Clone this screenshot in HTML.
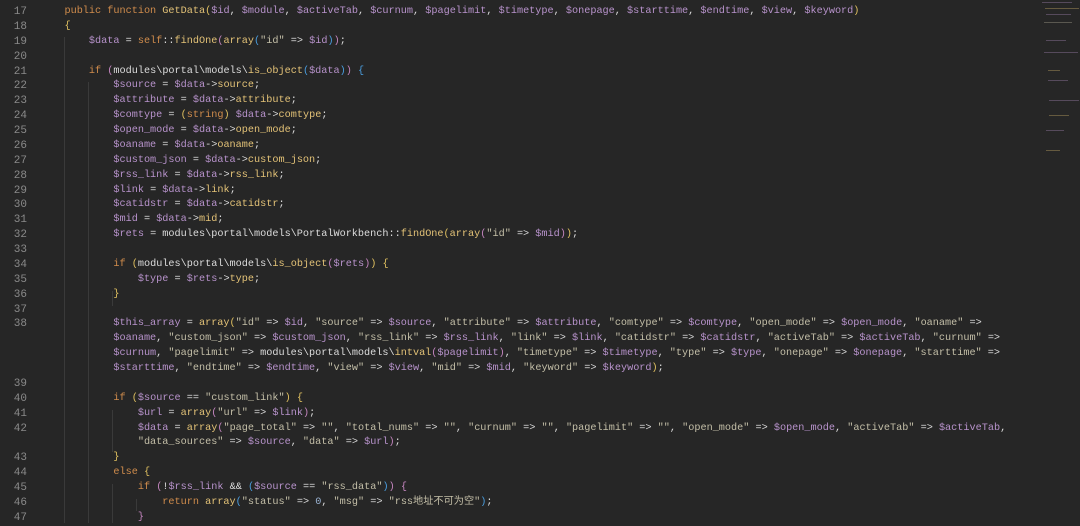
<!DOCTYPE html><html><head><meta charset="utf-8"><style>
body{margin:0;background:#262626;width:1080px;height:523px;overflow:hidden;font-family:"Liberation Mono","Noto Sans CJK SC",monospace;font-size:10.2px;}
.g{position:absolute;left:0;top:5px;width:27px;text-align:right;color:#8a8a8a;line-height:14.88px;white-space:pre;font-size:11px}
.c{position:absolute;left:40px;top:5px;color:#dcdcdc;line-height:14.88px;white-space:pre}
.k{color:#d08c4c}.f{color:#e3c277}.v{color:#b893cc}.s{color:#c4bfa8}.n{color:#9db6d6}
.b1{color:#e0c060}.b2{color:#c586c0}.b3{color:#4a9ee0}
.ig{position:absolute;width:1px;background:#3a3a3a}
.mm{position:absolute;height:1px;opacity:.35}
</style></head><body>
<div class="ig" style="left:64px;top:37px;height:486px"></div>
<div class="ig" style="left:88px;top:82px;height:441px"></div>
<div class="ig" style="left:112px;top:291px;height:15px"></div>
<div class="ig" style="left:112px;top:410px;height:42px"></div>
<div class="ig" style="left:112px;top:484px;height:39px"></div>
<div class="ig" style="left:136px;top:499px;height:12px"></div>
<div class="g">17
18
19
20
21
22
23
24
25
26
27
28
29
30
31
32
33
34
35
36
37
38



39
40
41
42

43
44
45
46
47</div>
<div class="c">    <span class="k">public function</span> <span class="f">GetData</span><span class="b1">(</span><span class="v">$id</span>, <span class="v">$module</span>, <span class="v">$activeTab</span>, <span class="v">$curnum</span>, <span class="v">$pagelimit</span>, <span class="v">$timetype</span>, <span class="v">$onepage</span>, <span class="v">$starttime</span>, <span class="v">$endtime</span>, <span class="v">$view</span>, <span class="v">$keyword</span><span class="b1">)</span>
    <span class="b1">{</span>
        <span class="v">$data</span> = <span class="k">self</span>::<span class="f">findOne</span><span class="b2">(</span><span class="f">array</span><span class="b3">(</span><span class="s">"id"</span> =&gt; <span class="v">$id</span><span class="b3">)</span><span class="b2">)</span>;

        <span class="k">if</span> <span class="b2">(</span>modules\portal\models\<span class="f">is_object</span><span class="b3">(</span><span class="v">$data</span><span class="b3">)</span><span class="b2">)</span> <span class="b3">{</span>
            <span class="v">$source</span> = <span class="v">$data</span>-&gt;<span class="f">source</span>;
            <span class="v">$attribute</span> = <span class="v">$data</span>-&gt;<span class="f">attribute</span>;
            <span class="v">$comtype</span> = <span class="b1">(</span><span class="k">string</span><span class="b1">)</span> <span class="v">$data</span>-&gt;<span class="f">comtype</span>;
            <span class="v">$open_mode</span> = <span class="v">$data</span>-&gt;<span class="f">open_mode</span>;
            <span class="v">$oaname</span> = <span class="v">$data</span>-&gt;<span class="f">oaname</span>;
            <span class="v">$custom_json</span> = <span class="v">$data</span>-&gt;<span class="f">custom_json</span>;
            <span class="v">$rss_link</span> = <span class="v">$data</span>-&gt;<span class="f">rss_link</span>;
            <span class="v">$link</span> = <span class="v">$data</span>-&gt;<span class="f">link</span>;
            <span class="v">$catidstr</span> = <span class="v">$data</span>-&gt;<span class="f">catidstr</span>;
            <span class="v">$mid</span> = <span class="v">$data</span>-&gt;<span class="f">mid</span>;
            <span class="v">$rets</span> = modules\portal\models\PortalWorkbench::<span class="f">findOne</span><span class="b1">(</span><span class="f">array</span><span class="b2">(</span><span class="s">"id"</span> =&gt; <span class="v">$mid</span><span class="b2">)</span><span class="b1">)</span>;

            <span class="k">if</span> <span class="b1">(</span>modules\portal\models\<span class="f">is_object</span><span class="b2">(</span><span class="v">$rets</span><span class="b2">)</span><span class="b1">)</span> <span class="b1">{</span>
                <span class="v">$type</span> = <span class="v">$rets</span>-&gt;<span class="f">type</span>;
            <span class="b1">}</span>

            <span class="v">$this_array</span> = <span class="f">array</span><span class="b1">(</span><span class="s">"id"</span> =&gt; <span class="v">$id</span>, <span class="s">"source"</span> =&gt; <span class="v">$source</span>, <span class="s">"attribute"</span> =&gt; <span class="v">$attribute</span>, <span class="s">"comtype"</span> =&gt; <span class="v">$comtype</span>, <span class="s">"open_mode"</span> =&gt; <span class="v">$open_mode</span>, <span class="s">"oaname"</span> =&gt;
            <span class="v">$oaname</span>, <span class="s">"custom_json"</span> =&gt; <span class="v">$custom_json</span>, <span class="s">"rss_link"</span> =&gt; <span class="v">$rss_link</span>, <span class="s">"link"</span> =&gt; <span class="v">$link</span>, <span class="s">"catidstr"</span> =&gt; <span class="v">$catidstr</span>, <span class="s">"activeTab"</span> =&gt; <span class="v">$activeTab</span>, <span class="s">"curnum"</span> =&gt;
            <span class="v">$curnum</span>, <span class="s">"pagelimit"</span> =&gt; modules\portal\models\<span class="f">intval</span><span class="b2">(</span><span class="v">$pagelimit</span><span class="b2">)</span>, <span class="s">"timetype"</span> =&gt; <span class="v">$timetype</span>, <span class="s">"type"</span> =&gt; <span class="v">$type</span>, <span class="s">"onepage"</span> =&gt; <span class="v">$onepage</span>, <span class="s">"starttime"</span> =&gt;
            <span class="v">$starttime</span>, <span class="s">"endtime"</span> =&gt; <span class="v">$endtime</span>, <span class="s">"view"</span> =&gt; <span class="v">$view</span>, <span class="s">"mid"</span> =&gt; <span class="v">$mid</span>, <span class="s">"keyword"</span> =&gt; <span class="v">$keyword</span><span class="b1">)</span>;

            <span class="k">if</span> <span class="b1">(</span><span class="v">$source</span> == <span class="s">"custom_link"</span><span class="b1">)</span> <span class="b1">{</span>
                <span class="v">$url</span> = <span class="f">array</span><span class="b2">(</span><span class="s">"url"</span> =&gt; <span class="v">$link</span><span class="b2">)</span>;
                <span class="v">$data</span> = <span class="f">array</span><span class="b2">(</span><span class="s">"page_total"</span> =&gt; <span class="s">""</span>, <span class="s">"total_nums"</span> =&gt; <span class="s">""</span>, <span class="s">"curnum"</span> =&gt; <span class="s">""</span>, <span class="s">"pagelimit"</span> =&gt; <span class="s">""</span>, <span class="s">"open_mode"</span> =&gt; <span class="v">$open_mode</span>, <span class="s">"activeTab"</span> =&gt; <span class="v">$activeTab</span>,
                <span class="s">"data_sources"</span> =&gt; <span class="v">$source</span>, <span class="s">"data"</span> =&gt; <span class="v">$url</span><span class="b2">)</span>;
            <span class="b1">}</span>
            <span class="k">else</span> <span class="b1">{</span>
                <span class="k">if</span> <span class="b2">(</span>!<span class="v">$rss_link</span> &amp;&amp; <span class="b3">(</span><span class="v">$source</span> == <span class="s">"rss_data"</span><span class="b3">)</span><span class="b2">)</span> <span class="b2">{</span>
                    <span class="k">return</span> <span class="f">array</span><span class="b3">(</span><span class="s">"status"</span> =&gt; <span class="n">0</span>, <span class="s">"msg"</span> =&gt; <span class="s">"rss地址不可为空"</span><span class="b3">)</span>;
                <span class="b2">}</span></div>
<div class="mm" style="left:1042px;top:2px;width:30px;background:#b18ec4"></div>
<div class="mm" style="left:1045px;top:8px;width:34px;background:#dcbd6f"></div>
<div class="mm" style="left:1046px;top:14px;width:25px;background:#b18ec4"></div>
<div class="mm" style="left:1044px;top:22px;width:28px;background:#bdb8a0"></div>
<div class="mm" style="left:1046px;top:40px;width:20px;background:#b18ec4"></div>
<div class="mm" style="left:1044px;top:52px;width:34px;background:#b18ec4"></div>
<div class="mm" style="left:1048px;top:70px;width:12px;background:#dcbd6f"></div>
<div class="mm" style="left:1048px;top:80px;width:20px;background:#b18ec4"></div>
<div class="mm" style="left:1049px;top:100px;width:30px;background:#b18ec4"></div>
<div class="mm" style="left:1049px;top:115px;width:20px;background:#dcbd6f"></div>
<div class="mm" style="left:1046px;top:130px;width:18px;background:#b18ec4"></div>
<div class="mm" style="left:1046px;top:150px;width:14px;background:#dcbd6f"></div>
</body></html>
